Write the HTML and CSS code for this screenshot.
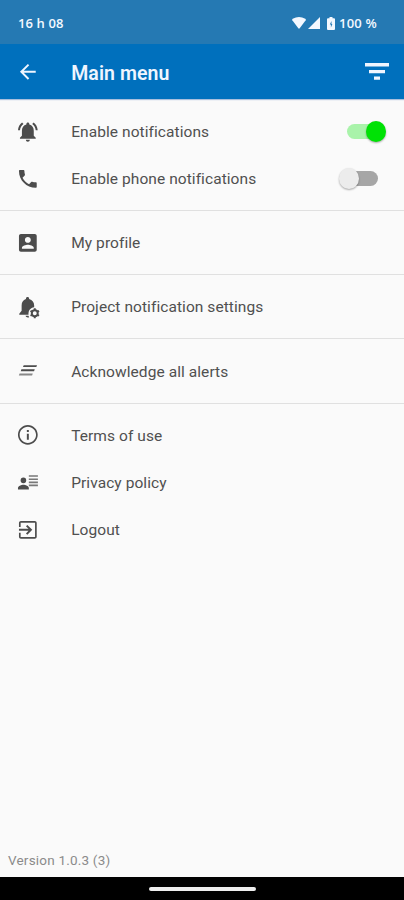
FILE: index.html
```html
<!DOCTYPE html>
<html lang="en">
<head>
<meta charset="utf-8">
<title>Main menu</title>
<link rel="stylesheet" href="styles.css">
</head>
<body>
<div class="screen">
  <div class="status">
    <span class="clock">16 h 08</span>
    <svg class="wifi" viewBox="0 0 14 12"><path d="M.3 3.300Q-.3 2.400.7 1.700Q7-1.500 13.300 1.700Q14.300 2.400 13.700 3.300L7.700 11.300Q7 12 6.300 11.300Z"/></svg>
    <svg class="signal" viewBox="0 0 12 12"><path d="M12 0V12H0Z"/></svg>
    <svg class="battery" viewBox="0 0 8 13"><path d="M2.500 0h3v1.300H7q1 0 1 1V12q0 1-1 1H1q-1 0-1-1V2.300q0-1 1-1h1.500z"/><path class="bolt" d="M4.500 4 2.800 7.600h1.100v2.800L5.400 6.900H4.500z"/></svg>
    <span class="level">100 %</span>
  </div>
  <header class="appbar">
    <svg class="icon" viewBox="0 0 24 24"><path d="M20 11H7.830l5.590-5.590L12 4l-8 8 8 8 1.410-1.410L7.830 13H20v-2z"/></svg>
    <h1>Main menu</h1>
    <svg class="filter" viewBox="0 0 24 17"><path d="M0 0H24V3.400H0zM4 7H20V10.200H4zM9 13.600H15V16.800H9z"/></svg>
  </header>
  <main>
    <section class="group">
      <div class="row">
        <svg class="icon" viewBox="0 0 24 24"><path d="M7.580 4.080 6.150 2.650C3.750 4.480 2.170 7.300 2.030 10.500h2c.15-2.650 1.510-4.970 3.550-6.420zM19.970 10.500h2c-.15-3.200-1.730-6.020-4.120-7.850l-1.420 1.430c2.020 1.450 3.390 3.770 3.540 6.420zM18 11c0-3.070-1.640-5.640-4.500-6.320V4c0-.83-.67-1.500-1.500-1.500s-1.500.67-1.500 1.500v.68C7.630 5.360 6 7.920 6 11v5l-2 2v1h16v-1l-2-2v-5zM12 22c1.100 0 2-.9 2-2h-4c0 1.100.9 2 2 2z"/></svg>
        <span class="label">Enable notifications</span><span class="switch on"></span>
      </div>
      <div class="row">
        <svg class="icon" viewBox="0 0 24 24"><path d="M6.620 10.790c1.440 2.830 3.760 5.140 6.590 6.590l2.200-2.200c.27-.27.67-.36 1.020-.24 1.120.37 2.330.57 3.570.57.550 0 1 .45 1 1V20c0 .55-.45 1-1 1C10.610 21 3 13.390 3 4c0-.55.45-1 1-1h3.500c.55 0 1 .45 1 1 0 1.250.2 2.450.57 3.570.11.35.03.74-.25 1.020l-2.200 2.200z"/></svg>
        <span class="label">Enable phone notifications</span><span class="switch"></span>
      </div>
    </section>
    <section class="group">
      <div class="row">
        <svg class="icon" viewBox="0 0 24 24"><path fill-rule="evenodd" d="M3 5v14c0 1.100.89 2 2 2h14c1.100 0 2-.9 2-2V5c0-1.100-.9-2-2-2H5c-1.110 0-2 .9-2 2zm12 4c0 1.660-1.340 3-3 3s-3-1.340-3-3 1.340-3 3-3 3 1.340 3 3zm-9 8c0-2 4-3.100 6-3.100s6 1.100 6 3.100v1H6v-1z"/></svg>
        <span class="label">My profile</span>
      </div>
    </section>
    <section class="group">
      <div class="row">
        <svg class="icon" viewBox="0 0 24 24"><path d="M11.700 2c-1 0-1.600.7-1.600 1.600v.5C7.100 5 5.700 7.600 5.700 10.600V16L3.300 19v1H12.700c-.3-4.300 2-7.200 5.700-7.600v-1.800c0-3-1.700-5.600-5.100-6.500v-.5c0-.9-.6-1.600-1.600-1.600zM9.700 21h2.900l.7 1.500c-1.700.6-3.300 0-3.600-1.500z"/><circle class="gear" cx="19" cy="18.500" r="3"/><path class="teeth" d="M19 13.500v2m0 6v2M14.700 16l1.700 1m5.200 3 1.700 1M14.700 21l1.700-1m5.200-3 1.700-1"/></svg>
        <span class="label">Project notification settings</span>
      </div>
    </section>
    <section class="group">
      <div class="row">
        <svg class="icon" viewBox="0 0 24 24"><path d="M7.800 6.300H21.300L20.600 8.200H7.100zM5.500 10.500H19L18.300 12.400H4.800z"/><path class="faded" d="M3.600 14.700H17L16.300 16.700H2.900z"/></svg>
        <span class="label">Acknowledge all alerts</span>
      </div>
    </section>
    <section class="group">
      <div class="row">
        <svg class="icon" viewBox="0 0 24 24"><path d="M11 7h2v2h-2zm0 4h2v6h-2zm1-9C6.480 2 2 6.480 2 12s4.480 10 10 10 10-4.480 10-10S17.520 2 12 2zm0 18.300c-4.600 0-8.300-3.700-8.300-8.300s3.700-8.300 8.300-8.300 8.300 3.700 8.300 8.300-3.700 8.300-8.300 8.300z"/></svg>
        <span class="label">Terms of use</span>
      </div>
      <div class="row">
        <svg class="icon" viewBox="0 0 24 24"><circle cx="7.500" cy="9.500" r="2.800"/><path d="M2 18.800v-1.500c0-2 3.500-3.300 5.500-3.300s5.500 1.300 5.500 3.300v1.500z"/><path class="lines" d="M13 4.300h9.200v1.600H13zM13 7.500h9.200v1.600H13zM13 10.700h9.200v1.600H13zM13 13.800h9.200v1.600H13z"/></svg>
        <span class="label">Privacy policy</span>
      </div>
      <div class="row">
        <svg class="icon" viewBox="0 0 24 24"><path d="M10.090 15.590 11.500 17l5-5-5-5-1.410 1.410L12.670 11H3v2h9.670l-2.580 2.590zM19 3H5c-1.110 0-2 .9-2 2v4h1.700V4.700H19.300V19.300H4.700V15H3v4c0 1.100.89 2 2 2h14c1.100 0 2-.9 2-2V5c0-1.100-.9-2-2-2z"/></svg>
        <span class="label">Logout</span>
      </div>
    </section>
  </main>
  <footer class="version">Version 1.0.3 (3)</footer>
  <div class="navbar"><span class="handle"></span></div>
</div>
</body>
</html>
```
FILE: styles.css
```css
* { box-sizing: border-box; }
body { margin: 0; font-family: Roboto, sans-serif; }
.screen { width: 404px; height: 900px; display: flex; flex-direction: column; background: #fafafa; overflow: hidden; }
svg { display: block; flex: none; fill: currentColor; overflow: visible; }
.status { height: 44px; flex: none; display: flex; align-items: center; padding: 2px 27px 0 18px; background: #2579b3; color: #f4f8ff; font: 600 13px "Open Sans", sans-serif; }
.clock { flex: 1; letter-spacing: .1px; }
.wifi { width: 14px; height: 12px; margin-right: 2px; }
.signal { width: 12px; height: 12px; margin-right: 7px; }
.battery { width: 8px; height: 13px; margin-right: 4px; }
.level { letter-spacing: .2px; }
.bolt { fill: #2579b3; }
.appbar { height: 55px; flex: none; display: flex; align-items: center; padding: 2px 15px 0 16px; background: #0070bd; color: #eff5ff; box-shadow: 0 1px 1px #a9bfdd; position: relative; }
.icon { width: 23.7px; height: 23.7px; color: #4c4c4c; }
.appbar .icon { color: inherit; margin-top: -2px; }
h1 { flex: 1; margin: 2px 0 0 31.500px; font-size: 19.500px; font-weight: 600; line-height: 24px; letter-spacing: .08px; }
.filter { width: 24px; height: 17px; margin-top: -2px; }
main { flex: 1; padding-top: 1px; }
.group { padding: 8px 0; border-bottom: 1.500px solid #e0e0e0; height: 64.200px; }
.group:first-child { height: 111px; }
.group:last-child { height: auto; border: 0; }
.row { height: 47.300px; display: flex; align-items: center; padding: 0 18px 0 16px; }
.label { flex: 1; margin-left: 31.500px; padding-top: 1px; font-size: 15.500px; letter-spacing: .07px; color: #505050; }
.switch { width: 32px; height: 15px; margin-right: 8px; border-radius: 8px; background: #a6a6a6; position: relative; }
.switch::before { content: ""; position: absolute; left: -7px; top: -3px; width: 20px; height: 21px; border-radius: 50%; background: #ececec; box-shadow: 0 1px 2px #0005; }
.switch.on { margin-right: 7px; background: #a9f3aa; }
.switch.on::before { left: 19px; background: #00e205; }
.gear { fill: none; stroke: currentColor; stroke-width: 2; }
.teeth { stroke: currentColor; stroke-width: 2; }
.faded { opacity: .65; }
.lines { opacity: .75; }
.version { padding: 0 8px 8px; font-size: 13.500px; line-height: 18px; letter-spacing: .2px; color: #8b8b8b; }
.navbar { height: 23px; flex: none; display: flex; justify-content: center; padding-top: 10px; background: #000; }
.handle { width: 107px; height: 4px; border-radius: 2px; background: #eee; }
```
